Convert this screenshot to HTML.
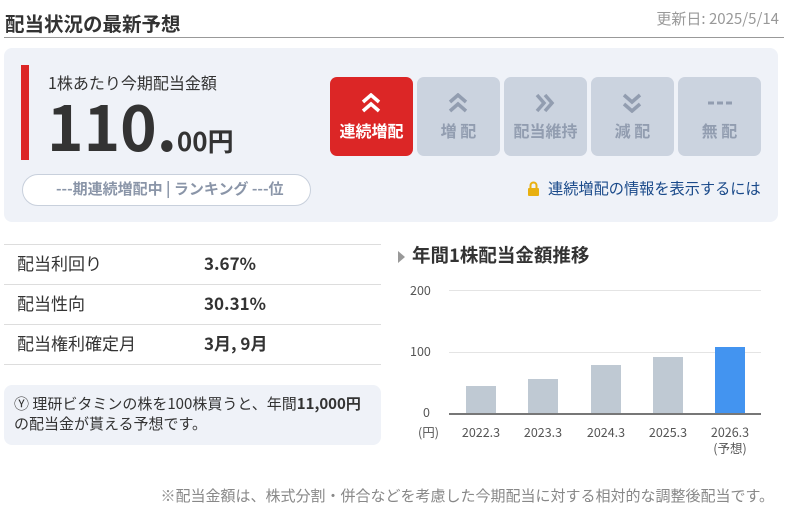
<!DOCTYPE html>
<html><head><meta charset="utf-8"><style>
*{margin:0;padding:0;box-sizing:border-box}
body{width:788px;height:521px;background:#fff;font-family:"Noto Sans CJK JP","Liberation Sans",sans-serif;color:#333;position:relative;overflow:hidden;line-height:1.3}
.a{position:absolute;white-space:nowrap}
.btn{position:absolute;top:77px;width:83px;height:79px;border-radius:7px;background:#cbd3df;color:#929db0;font-weight:bold;font-size:16px;text-align:center}
.btn svg{position:absolute;left:30px;top:16px}
.btn span{position:absolute;left:0;right:0;top:43px}
.row{position:absolute;left:4px;width:377px;height:40px;border-bottom:1px solid #ddd;font-size:17px}
.row .l{position:absolute;left:13px;top:7px}
.row .v{position:absolute;left:200px;top:7px;font-weight:bold}
.bar{position:absolute;width:30px;bottom:107px;background:#bfc9d3}
.xl{position:absolute;top:424px;font-size:12.5px;color:#555;text-align:center;width:50px;line-height:16px}
</style></head><body>
<div class="a" style="left:5px;top:10px;font-size:19.5px;font-weight:bold;color:#333">配当状況の最新予想</div>
<div class="a" style="right:9px;top:9px;font-size:15px;color:#999">更新日: 2025/5/14</div>
<div class="a" style="left:4px;top:37px;width:780px;height:1px;background:#999"></div>
<div class="a" style="left:4px;top:48px;width:774px;height:174px;background:#eff2f8;border-radius:8px"></div>
<div class="a" style="left:21px;top:65px;width:8px;height:95px;background:#dc2626"></div>
<div class="a" style="left:48px;top:72px;font-size:16px;color:#333">1株あたり今期配当金額</div>
<div class="a" style="left:47px;top:84px;font-weight:bold;color:#333;line-height:80px"><span style="font-size:62px;letter-spacing:0px">110.</span><span style="font-size:26px">00円</span></div>
<div class="a" style="left:22px;top:174px;width:289px;height:32px;background:#fff;border:1px solid #c8d0dc;border-radius:16px;font-size:15px;font-weight:bold;color:#8a95a8;padding:4px 0 0 33px">---期連続増配中 | ランキング ---位</div>
<div class="btn" style="left:330px;background:#dc2626;color:#fff"><svg width="22" height="20" viewBox="0 0 22 20"><path d="M3 9L11 2L19 9M3 18L11 11L19 18" fill="none" stroke="#fff" stroke-width="3.5"/></svg><span>連続増配</span></div>
<div class="btn" style="left:417px"><svg width="22" height="20" viewBox="0 0 22 20"><path d="M3 9L11 2L19 9M3 18L11 11L19 18" fill="none" stroke="#929db0" stroke-width="3.5"/></svg><span>増 配</span></div>
<div class="btn" style="left:504px"><svg width="22" height="20" viewBox="0 0 22 20"><path d="M3 2L10 10L3 18M11 2L18 10L11 18" fill="none" stroke="#929db0" stroke-width="3.5"/></svg><span>配当維持</span></div>
<div class="btn" style="left:591px"><svg width="22" height="20" viewBox="0 0 22 20"><path d="M3 2L11 9L19 2M3 11L11 18L19 11" fill="none" stroke="#929db0" stroke-width="3.5"/></svg><span>減 配</span></div>
<div class="btn" style="left:678px"><svg width="24" height="20" viewBox="0 0 24 20"><path d="M0 10H6M9 10H15M18 10H24" stroke="#929db0" stroke-width="3"/></svg><span>無 配</span></div>
<svg class="a" style="left:527px;top:181px" width="13" height="16" viewBox="0 0 13 16"><path d="M3.5 7V4.5a3 3 0 016 0V7" fill="none" stroke="#e8b010" stroke-width="2"/><rect x="1" y="7" width="11" height="8" rx="1" fill="#e8b010"/></svg>
<div class="a" style="left:548px;top:179px;font-size:15.2px;color:#1a4a8a">連続増配の情報を表示するには</div>
<div class="a" style="left:4px;top:244px;width:377px;height:1px;background:#ddd"></div>
<div class="row" style="top:245px"><span class="l">配当利回り</span><span class="v">3.67%</span></div>
<div class="row" style="top:285px"><span class="l">配当性向</span><span class="v">30.31%</span></div>
<div class="row" style="top:325px"><span class="l">配当権利確定月</span><span class="v">3月, 9月</span></div>
<div class="a" style="left:4px;top:385px;width:377px;height:60px;background:#eff2f8;border-radius:8px;font-size:15px;line-height:20px;padding:9px 0 0 10px;color:#333">Ⓨ 理研ビタミンの株を100株買うと、年間<b>11,000円</b><br>の配当金が貰える予想です。</div>
<svg class="a" style="left:398px;top:251px" width="8" height="12"><path d="M0 0L7 6L0 12Z" fill="#999"/></svg>
<div class="a" style="left:412px;top:243px;font-size:18.5px;font-weight:bold;color:#333">年間1株配当金額推移</div>
<div class="a" style="left:410px;top:282px;font-size:12.5px;color:#555">200</div>
<div class="a" style="left:410px;top:343px;font-size:12.5px;color:#555">100</div>
<div class="a" style="left:423px;top:404px;font-size:12.5px;color:#555">0</div>
<div class="a" style="left:449px;top:290px;width:312px;height:1px;background:#e4e4e4"></div>
<div class="a" style="left:449px;top:352px;width:312px;height:1px;background:#e4e4e4"></div>
<div class="bar" style="left:466px;height:28px"></div>
<div class="bar" style="left:528px;height:35px"></div>
<div class="bar" style="left:591px;height:49px"></div>
<div class="bar" style="left:653px;height:57px"></div>
<div class="bar" style="left:715px;height:67px;background:#4394f0"></div>
<div class="a" style="left:449px;top:413px;width:312px;height:2px;background:#777"></div>
<div class="a" style="left:418px;top:424px;font-size:12.5px;color:#555;line-height:16px">(円)</div>
<div class="xl" style="left:456px">2022.3</div>
<div class="xl" style="left:518px">2023.3</div>
<div class="xl" style="left:581px">2024.3</div>
<div class="xl" style="left:643px">2025.3</div>
<div class="xl" style="left:705px">2026.3<br>(予想)</div>
<div class="a" style="right:14px;top:486px;font-size:15px;color:#888">※配当金額は、株式分割・併合などを考慮した今期配当に対する相対的な調整後配当です。</div>
</body></html>
